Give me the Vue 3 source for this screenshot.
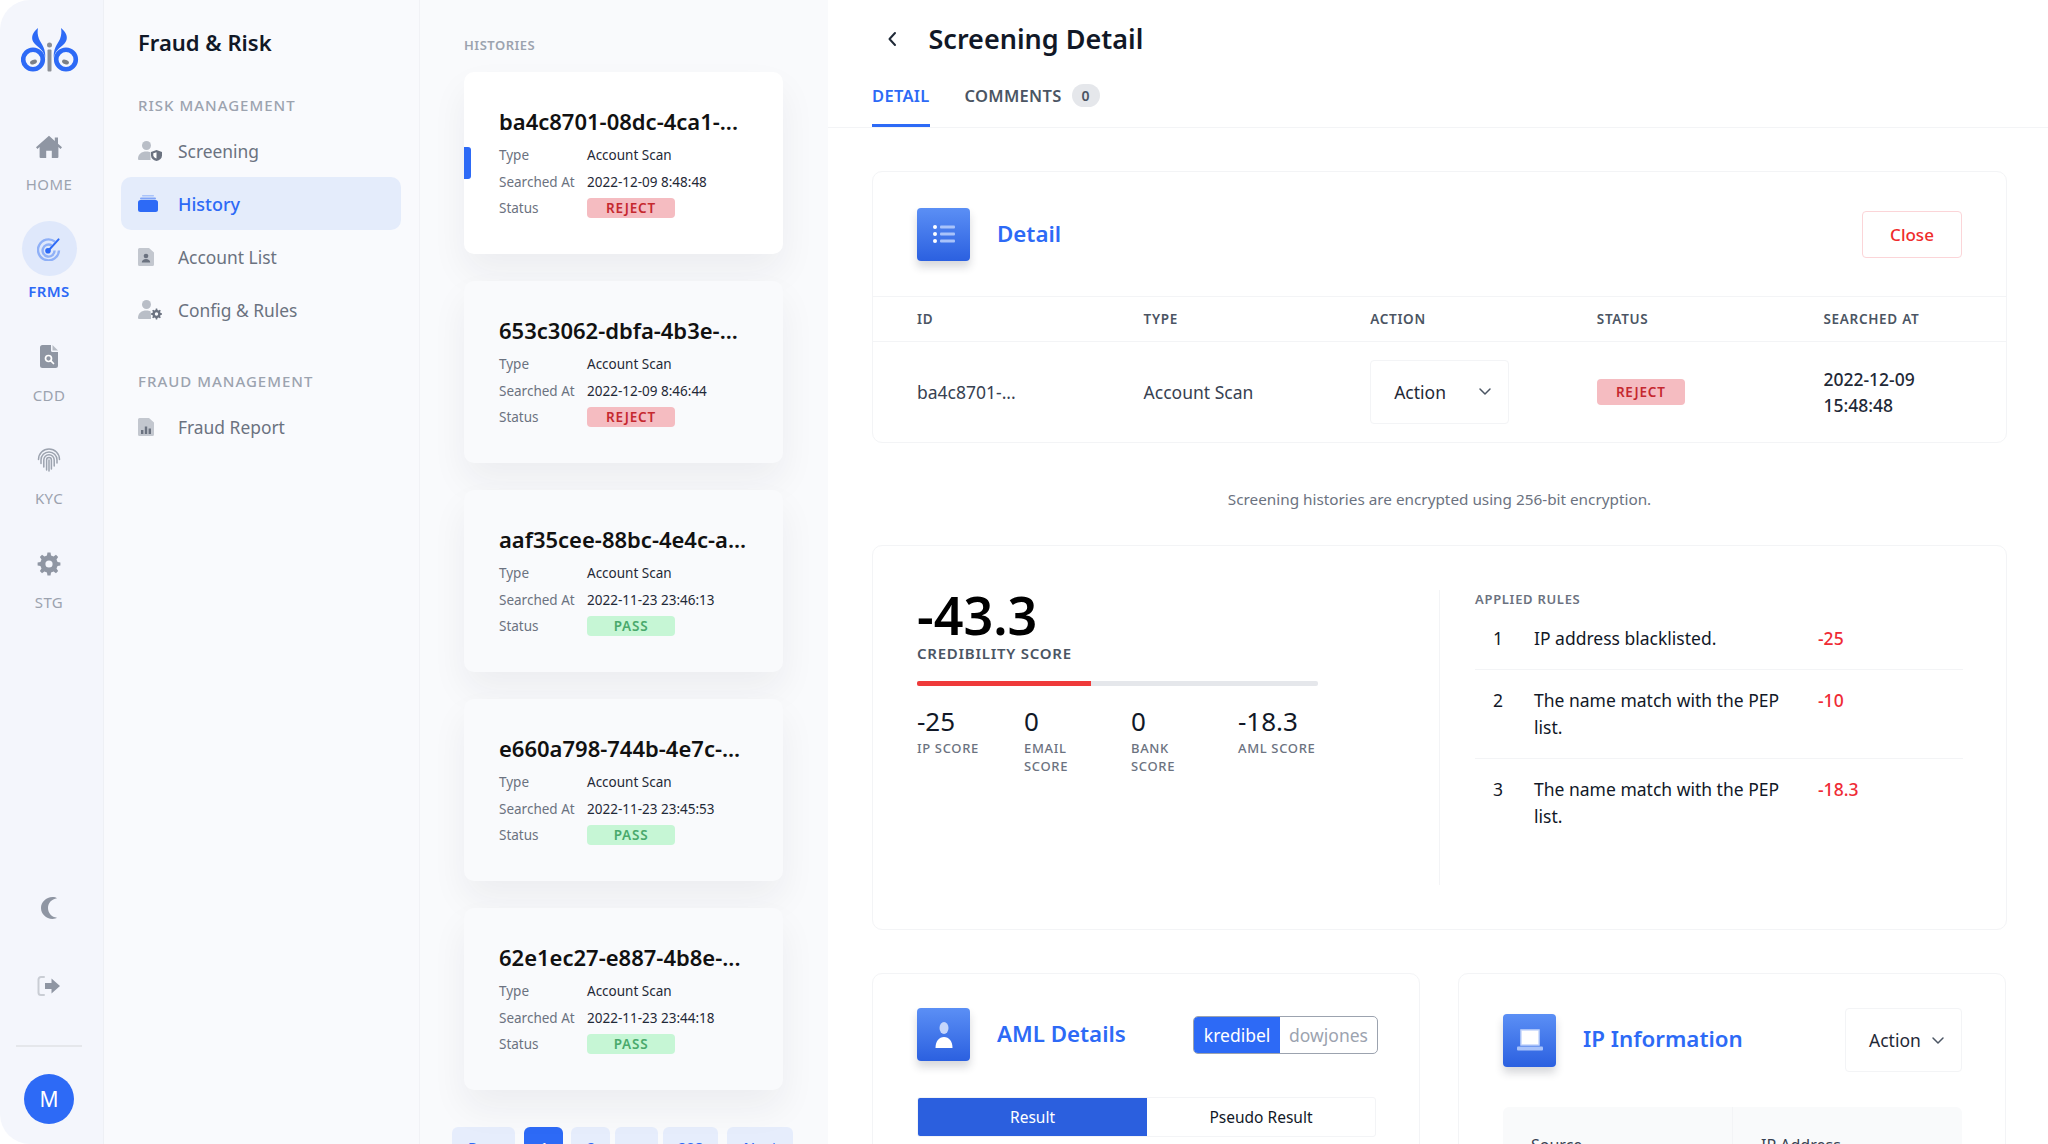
<script setup>
// Screening detail page of the fraud & risk module
import { ref } from 'vue'

const histories = ref([
  { id: 'ba4c8701-08dc-4ca1-...', at: '2022-12-09 8:48:48', status: 'REJECT', active: true },
  { id: '653c3062-dbfa-4b3e-...', at: '2022-12-09 8:46:44', status: 'REJECT' },
  { id: 'aaf35cee-88bc-4e4c-a...', at: '2022-11-23 23:46:13', status: 'PASS' },
  { id: 'e660a798-744b-4e7c-...', at: '2022-11-23 23:45:53', status: 'PASS' },
  { id: '62e1ec27-e887-4b8e-...', at: '2022-11-23 23:44:18', status: 'PASS' }
])

const scores = [
  { value: '-25', label: 'IP SCORE' },
  { value: '0', label: 'EMAIL SCORE' },
  { value: '0', label: 'BANK SCORE' },
  { value: '-18.3', label: 'AML SCORE' }
]

const rules = [
  { no: 1, text: 'IP address blacklisted.', score: '-25' },
  { no: 2, text: 'The name match with the PEP list.', score: '-10' },
  { no: 3, text: 'The name match with the PEP list.', score: '-18.3' }
]

const total = ref(-43.3)

// cog outline, used by the settings items
function gear(cx, cy, outer, inner, hole, teeth = 8) {
  let d = ''
  const step = (Math.PI * 2) / teeth
  for (let i = 0; i < teeth; i++) {
    const a = i * step - Math.PI / 2
    const pts = [
      [outer, a - step * 0.17],
      [outer, a + step * 0.17],
      [inner, a + step * 0.3],
      [inner, a + step * 0.7]
    ]
    pts.forEach(([r, t], j) => {
      const x = (cx + r * Math.cos(t)).toFixed(2)
      const y = (cy + r * Math.sin(t)).toFixed(2)
      d += `${i === 0 && j === 0 ? 'M' : 'L'}${x} ${y} `
    })
  }
  d += `Z M${cx - hole} ${cy} a${hole} ${hole} 0 1 0 ${hole * 2} 0 a${hole} ${hole} 0 1 0 ${-hole * 2} 0 Z`
  return d
}
</script>

<template>
  <div class="page">
    <aside class="rail">
      <svg class="logo" width="58" height="44" viewBox="0 0 58 44">
        <g>
          <circle cx="12" cy="31.5" r="9.8" fill="none" stroke="#2d6af6" stroke-width="4.6" />
          <path d="M17 0C10.5 5 9.5 11 13.5 15.5C18 20 24 23 24 31C25.5 21 20.5 16.5 18 11C16.5 7 16.3 3.5 17 0Z" fill="#2d6af6" />
          <ellipse cx="12.5" cy="34" rx="3.6" ry="2.2" transform="rotate(-22 12.5 34)" fill="#7b7f86" />
        </g>
        <g transform="matrix(-1 0 0 1 57 0)">
          <circle cx="12" cy="31.5" r="9.8" fill="none" stroke="#2d6af6" stroke-width="4.6" />
          <path d="M17 0C10.5 5 9.5 11 13.5 15.5C18 20 24 23 24 31C25.5 21 20.5 16.5 18 11C16.5 7 16.3 3.5 17 0Z" fill="#2d6af6" />
          <ellipse cx="12.5" cy="34" rx="3.6" ry="2.2" transform="rotate(-22 12.5 34)" fill="#7b7f86" />
        </g>
        <circle cx="28.5" cy="17" r="2.5" fill="#8b8f96" />
        <rect x="26.5" y="21.5" width="4" height="22" rx="1" fill="#8b8f96" />
      </svg>

      <nav class="rail-nav">
        <a class="rail-item">
          <span class="rail-icon">
            <svg width="26" height="23" viewBox="0 0 26 23"><path d="M13 .8 0 12.2l1.4 1.7L3.6 12v10a1 1 0 0 0 1 1h5.6v-7.2h5.6V23h5.6a1 1 0 0 0 1-1V12l2.2 1.9 1.4-1.7-4-3.5V2.5h-3.2v3.4L13 .8Z" fill="#8f96a3" /></svg>
          </span>
          <span>HOME</span>
        </a>
        <a class="rail-item active">
          <span class="rail-icon">
            <svg width="24" height="24" viewBox="0 0 24 24" fill="none">
              <path d="M18 4.6A10.5 10.5 0 1 0 22 13.5" stroke="#8fb0f7" stroke-width="2.4" />
              <path d="M14.6 8.4A6 6 0 1 0 17.6 13.5" stroke="#8fb0f7" stroke-width="2.4" />
              <path d="M11 14 21.6 2.4" stroke="#2d6af6" stroke-width="2" stroke-linecap="round" />
              <circle cx="11" cy="13.7" r="2.8" fill="#2d6af6" />
            </svg>
          </span>
          <span>FRMS</span>
        </a>
        <a class="rail-item">
          <span class="rail-icon">
            <svg width="18" height="23" viewBox="0 0 18 23">
              <path d="M2.5 0H11v5.5a1.5 1.5 0 0 0 1.5 1.5H18v13.5a2.5 2.5 0 0 1-2.5 2.5h-13A2.5 2.5 0 0 1 0 20.500V2.500A2.500 2.500 0 0 1 2.500 0Z" fill="#8f96a3" />
              <path d="M12.500 0 18 5.500h-5.500Z" fill="#b6bbc4" />
              <circle cx="8.500" cy="13.500" r="3" fill="none" stroke="#fff" stroke-width="1.700" />
              <path d="m10.700 15.700 2.800 2.800" stroke="#fff" stroke-width="1.700" stroke-linecap="round" />
            </svg>
          </span>
          <span>CDD</span>
        </a>
        <a class="rail-item">
          <span class="rail-icon">
            <svg width="24" height="24" viewBox="0 0 24 24" fill="none" stroke="#9ca3af" stroke-width="1.500" stroke-linecap="round">
              <path d="M1.500 11.500a10.500 10.500 0 0 1 21 0" />
              <path d="M4 15.500v-3.500a8 8 0 0 1 16 0v3" />
              <path d="M6.800 19v-7a5.200 5.200 0 0 1 10.400 0v6" />
              <path d="M9.600 22v-10a2.400 2.400 0 0 1 4.800 0v9" />
              <path d="M12 12v11" />
            </svg>
          </span>
          <span>KYC</span>
        </a>
        <a class="rail-item">
          <span class="rail-icon">
            <svg width="24" height="24" viewBox="0 0 24 24"><path :d="gear(12, 12, 11.500, 8.800, 3.600)" fill="#8f96a3" fill-rule="evenodd" /></svg>
          </span>
          <span>STG</span>
        </a>
      </nav>

      <div class="rail-foot">
        <svg class="moon" width="18" height="22" viewBox="0 0 18 22"><path d="M12.500 0C6 .5 1 5 1 11s5 10.500 11.500 11c2 0 3.500-.5 4.500-1.200C11.500 20 8 16 8 11s3.500-9 9-9.800C16 .4 14.500 0 12.500 0Z" fill="#8f96a3" /></svg>
        <svg class="logout" width="24" height="22" viewBox="0 0 24 22">
          <path d="M7 2H4a2.500 2.500 0 0 0-2.500 2.500v13A2.500 2.500 0 0 0 4 20h3" fill="none" stroke="#c9cdd4" stroke-width="2" stroke-linecap="round" />
          <path d="M8 8h6.500V3.500L23 11l-8.500 7.500V14H8Z" fill="#8f96a3" />
        </svg>
        <div class="rail-line"></div>
        <div class="avatar">M</div>
      </div>
    </aside>

    <aside class="menu">
      <h1 class="menu-title">Fraud &amp; Risk</h1>

      <p class="menu-section first">RISK MANAGEMENT</p>
      <a class="menu-item">
        <span class="menu-icon">
          <svg width="24" height="20" viewBox="0 0 24 20">
            <circle cx="8.500" cy="4.500" r="4.500" fill="#b9bec7" />
            <path d="M0 18c0-5 3.500-7.500 8.500-7.500 1.500 0 3 .2 4 .8V18a2 2 0 0 0 .3 1H1a1 1 0 0 1-1-1Z" fill="#b9bec7" />
            <path d="M18.500 9 24 11v3.500c0 2.700-2.200 4.700-5.500 5.500-3.300-.8-5.500-2.800-5.500-5.500V11Z" fill="#6b7280" />
            <path d="M18.500 11.300v6.300c-1.800-.6-3.200-1.700-3.200-3.300v-2Z" fill="#fff" />
          </svg>
        </span>
        Screening
      </a>
      <a class="menu-item active">
        <span class="menu-icon">
          <svg width="20" height="17" viewBox="0 0 20 17">
            <rect x="4" y="0" width="12" height="1.500" rx=".7" fill="#a9c3fa" />
            <rect x="2" y="2.500" width="16" height="2" rx="1" fill="#7ea3f8" />
            <rect x="0" y="5" width="20" height="12" rx="2.500" fill="#2d6af6" />
          </svg>
        </span>
        History
      </a>
      <a class="menu-item">
        <span class="menu-icon">
          <svg width="16" height="18" viewBox="0 0 16 18">
            <path d="M1.500 0H11l5 4.500v12a1.500 1.500 0 0 1-1.500 1.500h-13A1.500 1.500 0 0 1 0 16.500v-15A1.500 1.500 0 0 1 1.500 0Z" fill="#c3c7cf" />
            <circle cx="8" cy="8" r="2.300" fill="#6b7280" />
            <path d="M3.800 14.500c0-2.300 1.900-3.500 4.200-3.500s4.200 1.200 4.200 3.500Z" fill="#6b7280" />
          </svg>
        </span>
        Account List
      </a>
      <a class="menu-item">
        <span class="menu-icon">
          <svg width="24" height="20" viewBox="0 0 24 20">
            <circle cx="8.500" cy="4.500" r="4.500" fill="#b9bec7" />
            <path d="M0 18c0-5 3.500-7.500 8.500-7.500 1.500 0 3 .2 4 .8.500 2 .5 5 .5 7.700H1a1 1 0 0 1-1-1Z" fill="#b9bec7" />
            <path :d="gear(18.500, 14, 5.500, 4.200, 1.700)" fill="#6b7280" fill-rule="evenodd" />
          </svg>
        </span>
        Config &amp; Rules
      </a>

      <p class="menu-section">FRAUD MANAGEMENT</p>
      <a class="menu-item">
        <span class="menu-icon">
          <svg width="16" height="18" viewBox="0 0 16 18">
            <path d="M1.500 0H11l5 4.500v12a1.500 1.500 0 0 1-1.500 1.500h-13A1.500 1.500 0 0 1 0 16.500v-15A1.500 1.500 0 0 1 1.500 0Z" fill="#c3c7cf" />
            <rect x="3" y="12" width="2.400" height="4" fill="#6b7280" />
            <rect x="6.800" y="8.500" width="2.400" height="7.500" fill="#6b7280" />
            <rect x="10.600" y="10.500" width="2.400" height="5.500" fill="#6b7280" />
          </svg>
        </span>
        Fraud Report
      </a>
    </aside>

    <section class="histories">
      <p class="histories-label">HISTORIES</p>
      <div class="history-list">
        <article v-for="h in histories" :key="h.id" class="history" :class="{ active: h.active }">
          <i v-if="h.active" class="marker"></i>
          <h3>{{ h.id }}</h3>
          <dl>
            <dt>Type</dt><dd>Account Scan</dd>
            <dt>Searched At</dt><dd>{{ h.at }}</dd>
            <dt>Status</dt>
            <dd><span class="badge" :class="h.status === 'PASS' ? 'pass' : 'reject'">{{ h.status }}</span></dd>
          </dl>
        </article>
      </div>
      <div class="pager">
        <button class="prev">Prev</button>
        <button class="on">1</button>
        <button>2</button>
        <button class="tight">...</button>
        <button class="tight">208</button>
        <button class="next">Next</button>
      </div>
    </section>

    <main class="main">
      <header class="head">
        <svg width="10" height="16" viewBox="0 0 10 16" fill="none"><path d="M8 2 2.500 8 8 14" stroke="#1f2937" stroke-width="2" stroke-linecap="round" stroke-linejoin="round" /></svg>
        <h1>Screening Detail</h1>
      </header>

      <div class="tabs">
        <a class="tab on">DETAIL</a>
        <a class="tab">COMMENTS <span class="count">0</span></a>
      </div>

      <div class="content">
        <section class="card">
          <div class="card-head">
            <span class="tile">
              <svg width="24" height="20" viewBox="0 0 24 20">
                <g fill="#fff"><circle cx="3" cy="3" r="2" /><circle cx="3" cy="10" r="2" /><circle cx="3" cy="17" r="2" /></g>
                <g fill="#a9c3fa"><rect x="8" y="1.500" width="15" height="3" rx="1" /><rect x="8" y="8.500" width="15" height="3" rx="1" /><rect x="8" y="15.500" width="15" height="3" rx="1" /></g>
              </svg>
            </span>
            <h2>Detail</h2>
            <button class="close">Close</button>
          </div>
          <div class="grid grid-head">
            <span>ID</span><span>TYPE</span><span>ACTION</span><span>STATUS</span><span>SEARCHED AT</span>
          </div>
          <div class="grid grid-row">
            <span>ba4c8701-...</span>
            <span>Account Scan</span>
            <span>
              <span class="select wide">Action
                <svg width="14" height="9" viewBox="0 0 14 9" fill="none"><path d="m2 2 5 5 5-5" stroke="#4b5563" stroke-width="1.500" stroke-linecap="round" stroke-linejoin="round" /></svg>
              </span>
            </span>
            <span><span class="badge reject tall">REJECT</span></span>
            <span class="when">2022-12-09<br />15:48:48</span>
          </div>
        </section>

        <p class="note">Screening histories are encrypted using 256-bit encryption.</p>

        <section class="card score-card">
          <div class="score-left">
            <div class="total">{{ total }}</div>
            <div class="total-label">CREDIBILITY SCORE</div>
            <div class="bar"><div class="bar-fill" :style="{ width: Math.abs(total) + '%' }"></div></div>
            <div class="subs">
              <div v-for="s in scores" :key="s.label">
                <div class="sub-value">{{ s.value }}</div>
                <div class="sub-label">{{ s.label }}</div>
              </div>
            </div>
          </div>
          <div class="score-right">
            <p class="rules-title">APPLIED RULES</p>
            <div v-for="r in rules" :key="r.no" class="rule">
              <span class="rule-no">{{ r.no }}</span>
              <span class="rule-text">{{ r.text }}</span>
              <span class="rule-score">{{ r.score }}</span>
            </div>
          </div>
        </section>

        <div class="two">
          <section class="card sub-card">
            <div class="sub-head">
              <span class="tile">
                <svg width="20" height="26" viewBox="0 0 20 26">
                  <ellipse cx="10" cy="6" rx="4.500" ry="6" fill="#c5d6fb" />
                  <path d="M1.500 26c0-7 3.500-11 8.500-11s8.500 4 8.500 11Z" fill="#fff" />
                </svg>
              </span>
              <h2>AML Details</h2>
              <div class="toggle"><span class="on">kredibel</span><span>dowjones</span></div>
            </div>
            <div class="result-tabs"><span class="on">Result</span><span>Pseudo Result</span></div>
          </section>

          <section class="card sub-card">
            <div class="sub-head ip">
              <span class="tile">
                <svg width="28" height="22" viewBox="0 0 28 22">
                  <rect x="5" y="1" width="18" height="15" fill="#fff" stroke="#c5d6fb" stroke-width="1.500" />
                  <rect x="1" y="17.500" width="26" height="4" rx="1" fill="#a9c3fa" />
                </svg>
              </span>
              <h2>IP Information</h2>
              <span class="select">Action
                <svg width="14" height="9" viewBox="0 0 14 9" fill="none"><path d="m2 2 5 5 5-5" stroke="#4b5563" stroke-width="1.500" stroke-linecap="round" stroke-linejoin="round" /></svg>
              </span>
            </div>
            <div class="ip-table"><span>Source</span><span>IP Address</span></div>
          </section>
        </div>
      </div>
    </main>
  </div>
</template>

<style>
html, body { margin: 0; background: #fff; }
</style>

<style scoped>
* { box-sizing: border-box; }
.page { display: flex; height: 100vh; overflow: hidden; font-family: "Noto Sans", "Open Sans", sans-serif; color: #111827; background: #fff; }
h1, h2, h3, p, dl, dd { margin: 0; }

.rail { width: 104px; flex: none; display: flex; flex-direction: column; align-items: center; padding: 28px 5px 20px 0; background: #f4f6fc; border-right: 1px solid #eef0f5; border-radius: 30px 0 0 30px; }
.logo { flex: none; margin-left: 2px; }
.rail-nav { display: flex; flex-direction: column; align-items: center; gap: 33.5px; margin-top: 52px; }
.rail-item { display: flex; flex-direction: column; align-items: center; gap: 6px; font-size: 15px; line-height: 20px; letter-spacing: .4px; color: #9ca3af; }
.rail-icon { height: 44px; display: flex; align-items: center; justify-content: center; }
.rail-item.active { margin-top: -6.5px; gap: 5px; color: #2d6af6; font-weight: 600; }
.rail-item.active .rail-icon { width: 55px; height: 55px; border-radius: 50%; background: #dfe8fb; }
.rail-foot { margin-top: auto; display: flex; flex-direction: column; align-items: center; }
.logout { margin-top: 56px; }
.rail-line { width: 66px; height: 2px; margin-top: 48px; background: #e5e7eb; }
.avatar { width: 50px; height: 50px; margin-top: 27px; border-radius: 50%; background: #2d6af6; color: #fff; font-size: 21px; display: flex; align-items: center; justify-content: center; }

.menu { width: 316px; flex: none; padding: 27px 18px 0 17px; background: #f9fafd; border-right: 1px solid #f1f2f6; }
.menu-title { padding-left: 17px; font-size: 22px; line-height: 30px; font-weight: 600; }
.menu-section { padding-left: 17px; margin: 35px 0 9px; font-size: 15px; line-height: 20px; font-weight: 500; letter-spacing: 1px; color: #9ca3af; }
.menu-section.first { margin-top: 38px; }
.menu-item { display: flex; align-items: center; height: 53px; padding-left: 17px; font-size: 17.4px; color: #6b7280; border-radius: 10px; }
.menu-icon { width: 40px; flex: none; display: flex; align-items: center; }
.menu-item.active { background: #e4ecfb; color: #2d6af6; font-weight: 500; font-size: 18px; }

.histories { width: 408px; flex: none; padding: 35px 0 0 44px; background: #f9fafc; }
.histories-label { font-size: 13px; line-height: 20px; font-weight: 600; letter-spacing: .5px; color: #9ca3af; }
.history-list { display: flex; flex-direction: column; gap: 27px; margin-top: 17px; }
.history { position: relative; width: 319px; height: 182px; padding: 34px 0 0 35px; background: #f9fafc; border-radius: 10px; box-shadow: 0 18px 36px rgba(31, 41, 55, .06); }
.history.active { background: #fff; }
.marker { position: absolute; left: 0; top: 75px; width: 7px; height: 32px; background: #2d6af6; border-radius: 0 3px 3px 0; }
.history h3 { font-size: 22px; line-height: 30px; font-weight: 600; color: #111; white-space: nowrap; }
.history dl { display: grid; grid-template-columns: 88px 1fr; grid-auto-rows: 26.500px; align-items: center; margin-top: 6px; font-size: 13.5px; }
.history dt { color: #6b7280; }
.history dd { color: #1f2937; }
.badge { display: flex; align-items: center; justify-content: center; width: 88px; height: 20px; border-radius: 4px; font-size: 13.5px; font-weight: 600; letter-spacing: .8px; }
.badge.reject { background: #f5bcc1; color: #c5282f; }
.badge.pass { background: #c6f6d5; color: #4aa96c; }
.badge.tall { height: 26px; }
.pager { display: flex; gap: 8px; margin: 37px 0 0 -12px; }
.pager button { min-width: 39px; height: 40px; padding: 0 15px; border: 0; border-radius: 6px; background: #e6edfc; color: #2d6af6; font: 500 15px "Noto Sans", sans-serif; }
.pager button.on { background: #2d6af6; color: #fff; }
.pager button.tight { margin-left: -3px; }
.pager button.prev { padding: 0 16px; margin-right: 1px; }
.pager button.next { padding: 0 16px; margin-left: 1px; }

.main { flex: 1; min-width: 0; overflow: hidden; }
.head { display: flex; align-items: center; gap: 31.5px; height: 78px; padding-left: 59px; }
.head h1 { font-size: 27px; line-height: 36px; font-weight: 600; color: #111827; }
.tabs { display: flex; gap: 35px; height: 50px; padding-left: 44px; border-bottom: 1px solid #f3f4f6; }
.tab { height: 49px; display: flex; align-items: center; padding-bottom: 14px; font-size: 16.5px; font-weight: 600; letter-spacing: .3px; color: #4b5563; }
.tab.on { color: #2d6af6; border-bottom: 3px solid #2d6af6; padding-bottom: 11px; }
.count { display: inline-flex; align-items: center; justify-content: center; width: 28px; height: 23px; margin-left: 10px; border-radius: 12px; background: #e5e7eb; font-size: 14px; letter-spacing: 0; }

.content { padding: 43px 41px 0 44px; }
.card { background: #fff; border: 1px solid #f3f4f6; border-radius: 10px; }
.card-head { display: flex; align-items: center; gap: 27px; height: 125px; padding: 0 44px; border-bottom: 1px solid #f3f4f6; }
.tile { flex: none; width: 53px; height: 53px; display: flex; align-items: center; justify-content: center; border-radius: 4px; background: linear-gradient(#5b8ff5, #2b60e0); box-shadow: 0 6px 8px rgba(31, 41, 55, .18); }
.card h2 { font-size: 22.3px; line-height: 30px; font-weight: 600; color: #2d6af6; white-space: nowrap; }
.close { width: 100px; height: 47px; margin-left: auto; background: #fff; border: 1px solid #fbd5d8; border-radius: 4px; color: #ef2b2b; font: 500 17px "Noto Sans", sans-serif; }
.grid { display: grid; grid-template-columns: repeat(5, 1fr); }
.grid > span { padding-left: 44px; }
.grid-head { height: 45px; align-items: center; font-size: 13.5px; font-weight: 600; letter-spacing: .7px; color: #4b5563; border-bottom: 1px solid #f3f4f6; }
.grid-row { height: 100px; padding-bottom: 1px; align-items: center; font-size: 17.5px; color: #374151; }
.select { display: inline-flex; align-items: center; justify-content: space-between; width: 117px; height: 64px; padding: 0 16px 0 23px; background: #fff; border: 1px solid #f3f4f6; border-radius: 4px; font-size: 17.5px; color: #1f2937; white-space: nowrap; flex: none; }
.select.wide { width: 139px; }
.when { line-height: 26px; font-weight: 500; color: #1f2937; }
.note { height: 102px; padding-top: 9px; display: flex; align-items: center; justify-content: center; font-size: 15.3px; color: #6b7280; }

.score-card { display: grid; grid-template-columns: 566px 1fr; padding: 44px 0; min-height: 385px; }
.score-left { padding-left: 44px; }
.total { font-size: 52px; line-height: 50px; font-weight: 600; color: #000; }
.total-label { margin-top: 3px; font-size: 15px; line-height: 20px; font-weight: 600; letter-spacing: .75px; color: #4b5563; }
.bar { width: 401px; height: 5px; margin-top: 18px; border-radius: 2px; background: #e5e7eb; overflow: hidden; }
.bar-fill { height: 100%; background: #ef3a3a; }
.subs { display: grid; grid-template-columns: repeat(4, 80px); column-gap: 27px; margin-top: 19px; }
.sub-value { font-size: 26px; line-height: 32px; color: #111827; }
.sub-label { margin-top: 2px; font-size: 13px; line-height: 18px; font-weight: 500; letter-spacing: .65px; color: #6b7280; }
.score-right { padding-left: 35px; border-left: 1px solid #f3f4f6; }
.rules-title { font-size: 13px; line-height: 18px; font-weight: 600; letter-spacing: .7px; color: #6b7280; }
.rule { display: grid; grid-template-columns: 59px 284px auto; width: 488px; padding: 17px 0 17px; font-size: 17.5px; line-height: 27px; color: #111827; border-bottom: 1px solid #f3f4f6; }
.rule:last-child { border-bottom: 0; }
.rule-no { padding-left: 18px; }
.rule-text { padding-right: 20px; }
.rule-score { color: #ef2b35; font-weight: 500; }

.two { display: grid; grid-template-columns: 548px 548px; column-gap: 38px; margin-top: 43px; }
.sub-card { height: 400px; padding: 34px 43px 0 44px; }
.sub-head { display: flex; align-items: center; gap: 27px; }
.sub-head h2 { margin-top: -2px; }
.sub-head.ip { justify-content: flex-start; height: 64px; }
.sub-head.ip .select { margin-left: auto; }
.toggle { display: flex; margin: 0 -2px 0 auto; height: 38px; font-size: 17.5px; border: 1.500px solid #9ca3af; border-radius: 5px; overflow: hidden; color: #9ca3af; }
.toggle span { display: flex; align-items: center; padding: 0 9px; }
.toggle .on { width: 86px; background: #2d6af6; color: #fff; padding: 0; justify-content: center; }
.result-tabs { display: grid; grid-template-columns: 229px 1fr; height: 40px; margin-top: 36px; font-size: 15.500px; border: 1px solid #f3f4f6; border-radius: 3px; overflow: hidden; }
.result-tabs span { display: flex; align-items: center; justify-content: center; }
.result-tabs .on { background: #2b5fde; color: #fff; }
.ip-table { display: grid; grid-template-columns: 229px 1fr; height: 200px; margin-top: 35px; background: #f9fafb; border-radius: 6px; font-size: 16px; color: #374151; }
.ip-table span { padding: 27px 0 0 28px; }
.ip-table span + span { border-left: 1px solid #f3f4f6; }
</style>
